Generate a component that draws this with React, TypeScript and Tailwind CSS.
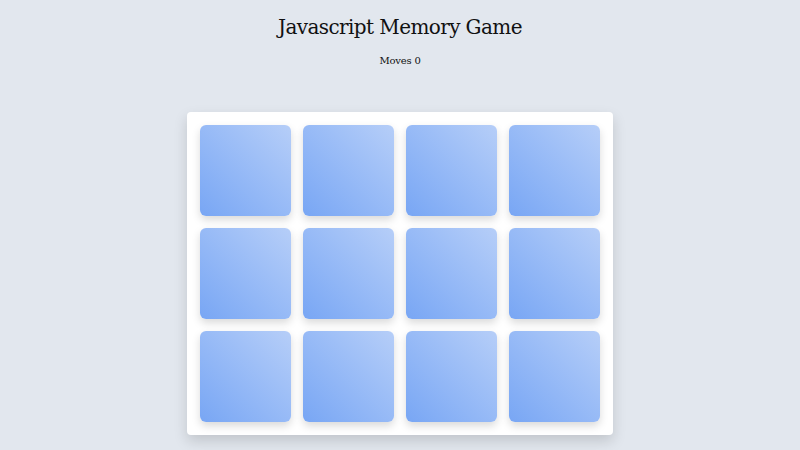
const cards = Array.from({ length: 12 }, (_, i) => i)

export default function App() {
  return (
    <div
      className="min-h-[450px] bg-[#e2e7ee] flex flex-col items-center text-[#111]"
      style={{ fontFamily: '"DejaVu Serif", serif' }}
    >
      <h1 className="mt-[14px] text-[20px] leading-[26px] tracking-[-0.6px]">Javascript Memory Game</h1>
      <p className="mt-[14px] text-[10px] leading-[14px] tracking-[-0.2px]">Moves 0</p>
      <div className="mt-[44px] bg-white rounded-[4px] p-[13px] shadow-[0_6px_14px_rgba(0,0,0,0.15)] grid grid-cols-4 gap-[12px]">
        {cards.map((c) => (
          <div
            key={c}
            className="w-[91px] h-[91px] rounded-[6px] bg-linear-to-tr from-[#78a6f4] to-[#b6cef8] shadow-[0_4px_8px_rgba(0,0,0,0.15)]"
          />
        ))}
      </div>
    </div>
  )
}
